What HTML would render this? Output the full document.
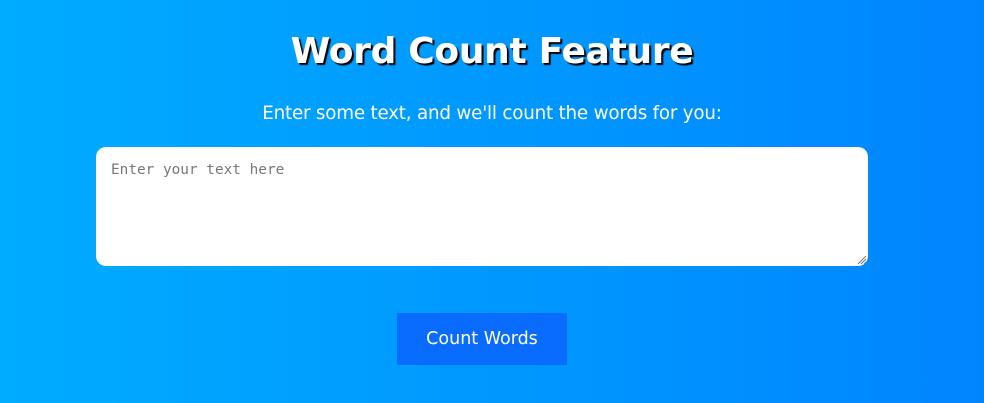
<!DOCTYPE html>
<html><head><style>
html,body{margin:0;width:984px;height:403px;overflow:hidden}
body{background:linear-gradient(90deg,#00acff,#0085ff);font-family:"DejaVu Sans","Liberation Sans",sans-serif;color:#fff;position:relative}
h1{position:absolute;left:0;right:0;top:31px;margin:0;text-align:center;font-size:36px;font-weight:bold;text-shadow:2px 2px 1px #000;letter-spacing:-0.3px}
p{position:absolute;left:0;right:0;top:103px;margin:0;text-align:center;font-size:18.3px;letter-spacing:-0.2px}
.ta{position:absolute;left:96px;top:147px;width:772px;height:119px;background:#fff;border-radius:10px;overflow:hidden}
.ta span{position:absolute;left:15px;top:15px;font-family:"DejaVu Sans Mono","Liberation Mono",monospace;font-size:14.4px;color:#777}
.ta svg{position:absolute;right:1px;bottom:1px}
.btn{position:absolute;left:397px;top:313px;width:170px;height:52px;background:#0a6cff;display:flex;align-items:center;justify-content:center;font-size:17.5px}
</style></head><body>
<h1>Word Count Feature</h1>
<p>Enter some text, and we'll count the words for you:</p>
<div class="ta"><span>Enter your text here</span><svg width="10" height="10"><path d="M9 1L1 9M9 4L4 9M9 7L7 9" stroke="#777" stroke-width="1"/></svg></div>
<div class="btn">Count Words</div>
</body></html>
